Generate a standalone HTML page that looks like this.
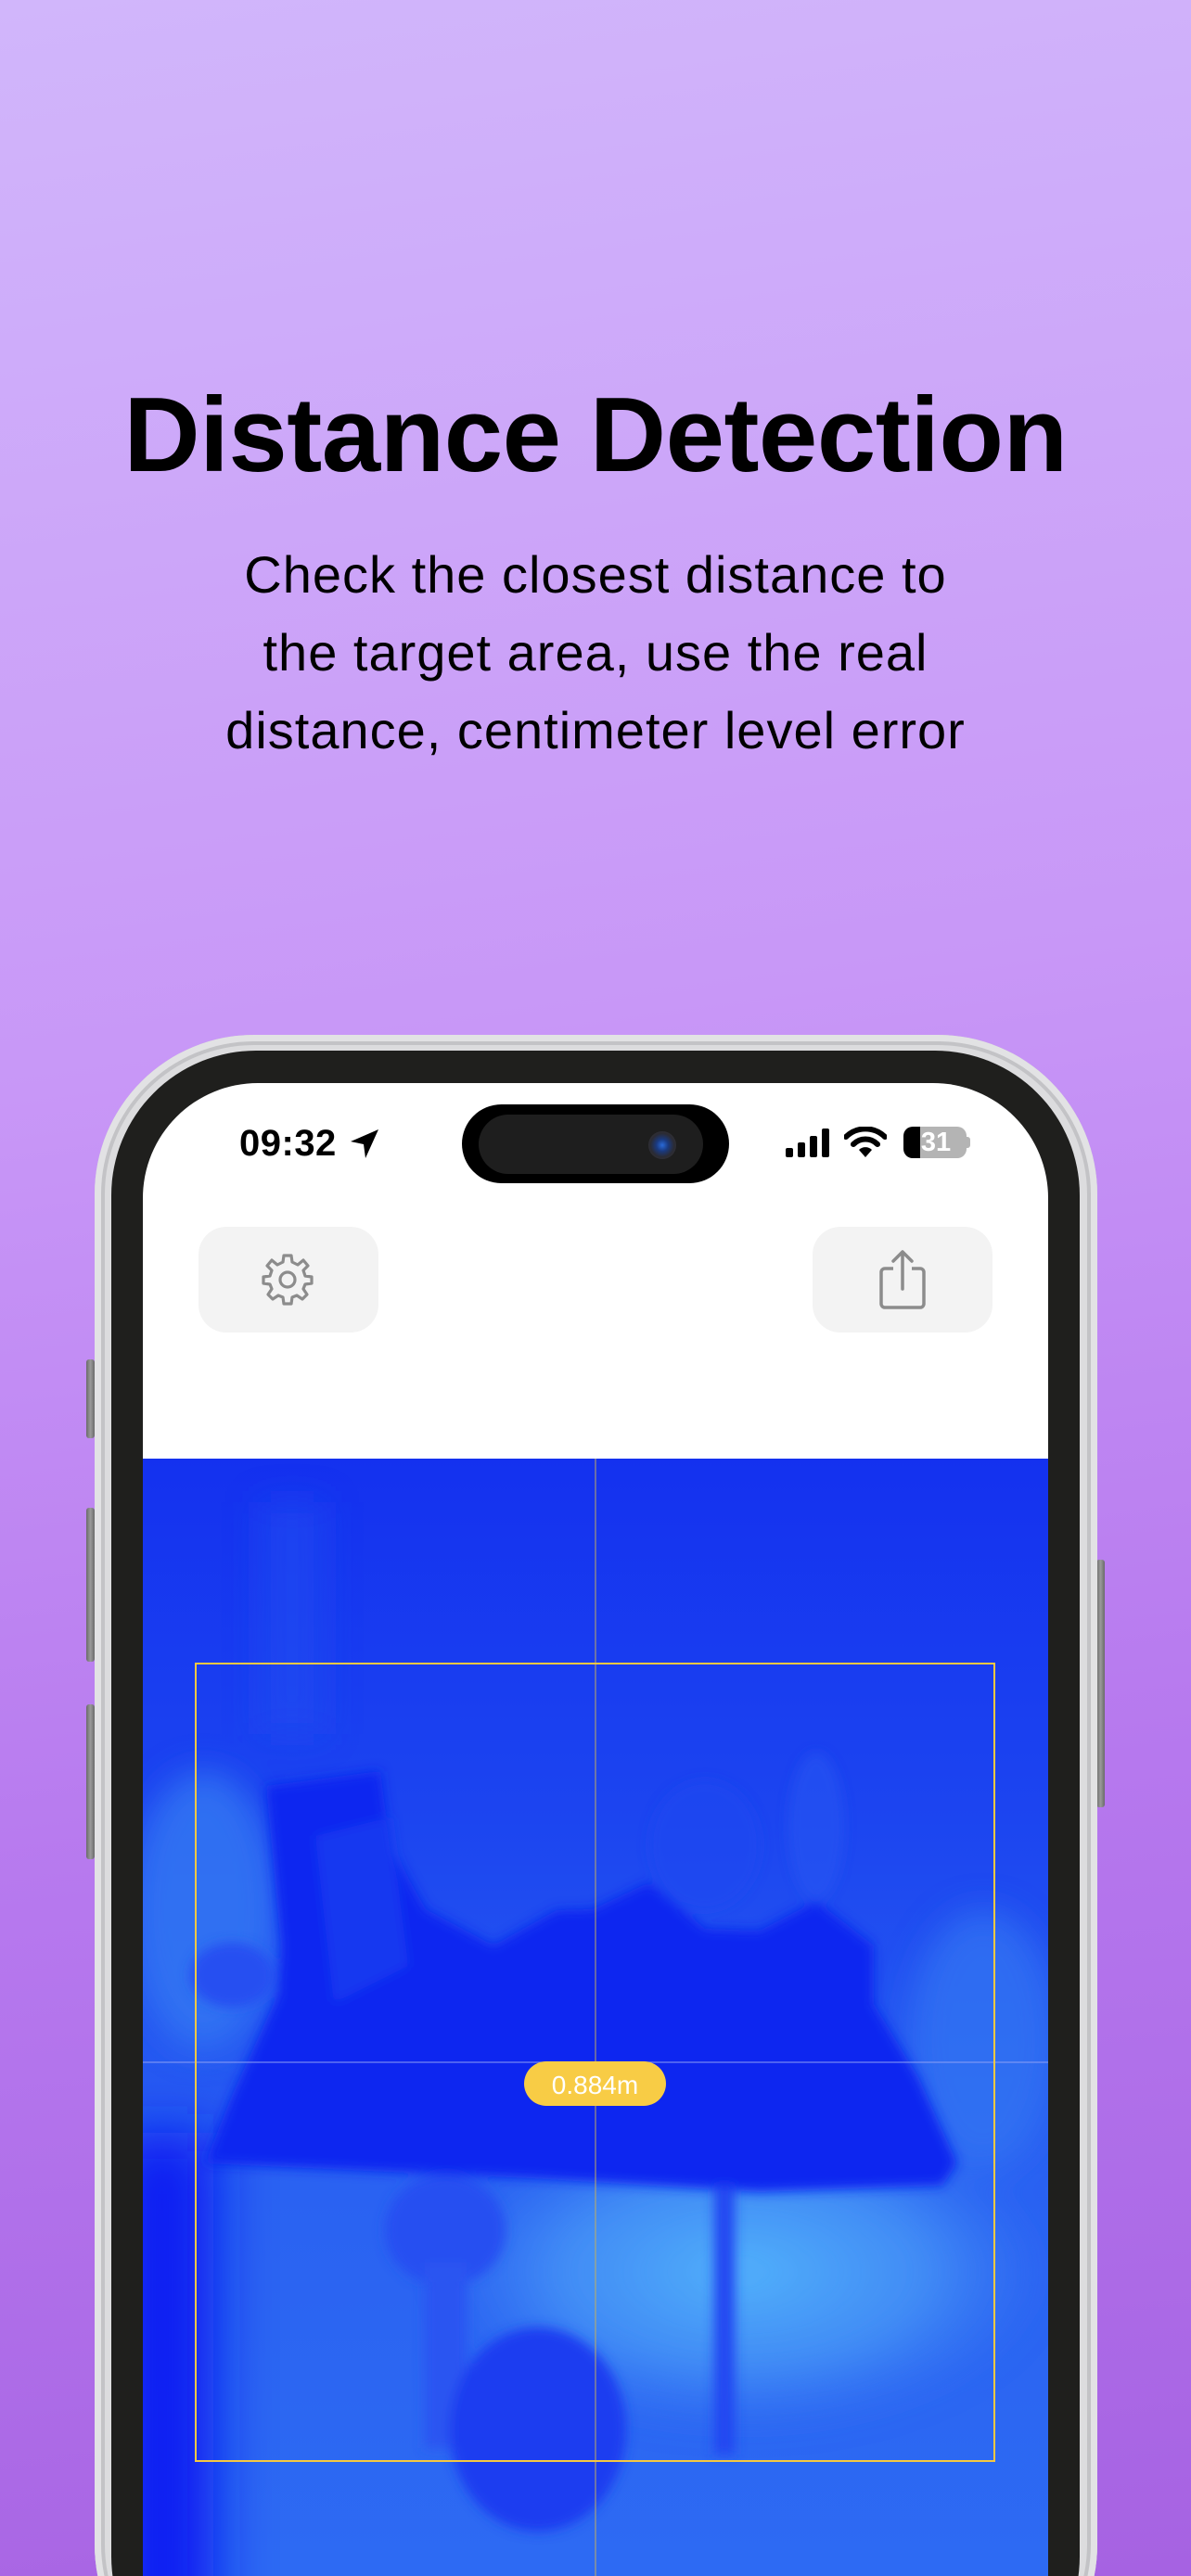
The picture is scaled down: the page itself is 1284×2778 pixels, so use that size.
<!DOCTYPE html>
<html><head><meta charset="utf-8"><style>
*{margin:0;padding:0;box-sizing:border-box}
html,body{width:1284px;height:2778px;overflow:hidden}
body{position:relative;font-family:"Liberation Sans",sans-serif;background:linear-gradient(172deg,#d1b6fb 0%,#c897f7 40%,#b678ee 70%,#a662e2 100%)}
.abs{position:absolute}
#wrap{position:absolute;left:0;top:0;width:1284px;height:2778px;overflow:hidden}
h1{position:absolute;left:0;width:1284px;top:405px;text-align:center;font-size:114px;font-weight:bold;color:#000;line-height:130px;letter-spacing:-0.5px}
.sub{position:absolute;left:0;width:1284px;top:578px;text-align:center;font-size:56px;line-height:84px;color:#000;letter-spacing:1px}
.frame{left:102px;top:1116px;width:1081px;height:1800px;border-radius:172px;background:#dcdcde;box-shadow:inset 0 0 0 7px #e2e2e4,inset 0 0 0 11px #c3c3c6}
.bezel{left:120px;top:1133px;width:1044px;height:1780px;border-radius:156px;background:#1f1f1d}
.screen{left:154px;top:1168px;width:976px;height:1740px;border-radius:124px;background:#fff;overflow:hidden}
.btn{background:#f3f3f3;border-radius:30px;width:194px;height:114px;top:1323px}
.sidebtn{background:linear-gradient(90deg,#6a6a6a,#9a9a9a,#6a6a6a);border-radius:3px;width:9px}
</style></head><body><div id="wrap">
<h1>Distance Detection</h1>
<div class="sub">Check the closest distance to<br>the target area, use the real<br>distance, centimeter level error</div>

<div class="abs sidebtn" style="left:93px;top:1466px;height:85px"></div>
<div class="abs sidebtn" style="left:93px;top:1626px;height:166px"></div>
<div class="abs sidebtn" style="left:93px;top:1838px;height:167px"></div>
<div class="abs sidebtn" style="left:1182px;top:1682px;height:267px"></div>

<div class="abs frame"></div>
<div class="abs bezel"></div>
<div class="abs screen">
  <svg class="abs" style="left:0;top:405px" width="976" height="1300" viewBox="154 1573 976 1300">
    <defs>
      <filter id="b1" x="-50%" y="-50%" width="200%" height="200%"><feGaussianBlur stdDeviation="18"/></filter>
      <filter id="b3" x="-100%" y="-50%" width="300%" height="200%"><feGaussianBlur stdDeviation="30"/></filter>
      <filter id="b2" x="-20%" y="-20%" width="140%" height="140%"><feGaussianBlur stdDeviation="6"/></filter>
      <linearGradient id="bg" x1="0" y1="0" x2="0" y2="1">
        <stop offset="0" stop-color="#1431ef"/>
        <stop offset="0.3" stop-color="#1c45f0"/>
        <stop offset="0.6" stop-color="#2a62f2"/>
        <stop offset="1" stop-color="#2e6cf3"/>
      </linearGradient>
      <radialGradient id="lt" cx="0.5" cy="0.5" r="0.5">
        <stop offset="0" stop-color="#52b2fa"/>
        <stop offset="0.6" stop-color="#4796f6" stop-opacity="0.8"/>
        <stop offset="1" stop-color="#3b80f4" stop-opacity="0"/>
      </radialGradient>
    </defs>
    <rect x="154" y="1573" width="976" height="1300" fill="url(#bg)"/>
    <g filter="url(#b1)">
      <ellipse cx="800" cy="2450" rx="330" ry="170" fill="url(#lt)"/>
      <ellipse cx="220" cy="2060" rx="80" ry="150" fill="#3679f2" opacity="0.8"/>
      <ellipse cx="1060" cy="2200" rx="80" ry="140" fill="#3477f2" opacity="0.7"/>
      <rect x="280" y="1620" width="70" height="250" fill="#2550f1" opacity="0.5"/>
    </g>
    <g filter="url(#b3)">
      <rect x="120" y="2300" width="110" height="600" fill="#0a1cf2"/>
    </g>
    <g filter="url(#b2)" fill="#0e26f0">
      <polygon points="287,1926 410,1910 420,1990 459,2059 532,2098 600,2060 639,2059 700,2030 760,2080 819,2082 880,2050 942,2098 942,2161 990,2240 1032,2333 1016,2357 819,2364 573,2349 221,2333 250,2260 270,2216 300,2150 303,2098"/>
      <polygon points="340,1980 420,1960 440,2120 360,2160" fill="#1637f0"/>
      <ellipse cx="480" cy="2405" rx="65" ry="60" fill="#2550f1"/>
      <rect x="770" y="2357" width="22" height="290" fill="#2246f1"/>
      <rect x="458" y="2440" width="45" height="200" fill="#2a55f1"/>
      <ellipse cx="580" cy="2620" rx="95" ry="110" fill="#1c3ef0"/>
      <ellipse cx="250" cy="2130" rx="45" ry="35" fill="#2550f1"/>
      <ellipse cx="760" cy="1990" rx="60" ry="70" fill="#2249f0" opacity="0.6"/>
      <ellipse cx="880" cy="1970" rx="30" ry="80" fill="#2a55f1" opacity="0.6"/>
    </g>
    <line x1="642" y1="1573" x2="642" y2="2873" stroke="#c8b05a" stroke-width="1.2" opacity="0.8"/>
    <line x1="154" y1="2224" x2="1130" y2="2224" stroke="#8fa0f5" stroke-width="1.2" opacity="0.8"/>
    <rect x="211" y="1794" width="861" height="860" fill="none" stroke="#f5c842" stroke-width="2"/>
    <rect x="565" y="2223" width="153" height="48" rx="24" fill="#f8cc45"/>
    <text x="641.5" y="2258" text-anchor="middle" font-family="Liberation Sans, sans-serif" font-size="28" fill="#fff">0.884m</text>
  </svg>
</div>

<div class="abs" style="left:498px;top:1191px;width:288px;height:85px;border-radius:43px;background:#000"></div>
<div class="abs" style="left:516px;top:1202px;width:242px;height:64px;border-radius:32px;background:#1e1e1e"></div>
<div class="abs" style="left:699px;top:1220px;width:30px;height:30px;border-radius:50%;background:radial-gradient(circle at 50% 50%,#2a6ad8 0,#1a3a80 30%,#2b2b33 60%,#3a3a40 100%)"></div>

<div class="abs" style="left:258px;top:1210px;font-size:40px;font-weight:bold;color:#000;line-height:46px;letter-spacing:0.5px">09:32</div>
<svg class="abs" style="left:376px;top:1217px" width="34" height="34" viewBox="0 0 34 34"><path d="M32 1 L2 14 L16 17 L18 32 Z" fill="#000"/></svg>
<svg class="abs" style="left:846px;top:1216px" width="52" height="32" viewBox="0 0 52 32">
  <rect x="1" y="22" width="8" height="10" rx="2"/><rect x="14" y="16" width="8" height="16" rx="2"/><rect x="27" y="9" width="8" height="23" rx="2"/><rect x="40" y="1" width="8" height="31" rx="2"/>
</svg>
<svg class="abs" style="left:910px;top:1215px" width="46" height="34" viewBox="0 0 46 34">
  <path d="M2 11 A30 30 0 0 1 44 11" stroke="#000" stroke-width="6" fill="none" stroke-linecap="round"/>
  <path d="M10 19 A18 18 0 0 1 36 19" stroke="#000" stroke-width="6" fill="none" stroke-linecap="round"/>
  <path d="M16 25 L23 33 L30 25 A10 10 0 0 0 16 25Z" fill="#000"/>
</svg>
<div class="abs" style="left:974px;top:1215px;width:68px;height:34px;border-radius:10px;background:linear-gradient(90deg,#000 0 18px,#b4b4b4 18px)"></div>
<div class="abs" style="left:1042px;top:1226px;width:4px;height:12px;border-radius:0 3px 3px 0;background:#b4b4b4"></div>
<div class="abs" style="left:984px;top:1214px;width:50px;font-size:29px;font-weight:bold;color:#fff;line-height:36px;text-align:center">31</div>

<div class="abs btn" style="left:214px"></div>
<div class="abs btn" style="left:876px"></div>
<svg class="abs" style="left:281px;top:1351px" width="58" height="58" viewBox="-29 -29 58 58">
  <path d="M-4,-26 L4,-26 L5,-19 L11,-16 L17,-21 L22,-15 L17,-10 L19,-4 L26,-3 L26,4 L19,5 L17,10 L21,16 L16,21 L10,17 L5,19 L4,26 L-4,26 L-5,19 L-10,17 L-16,21 L-21,16 L-17,10 L-19,5 L-26,4 L-26,-3 L-19,-4 L-17,-10 L-22,-15 L-17,-21 L-11,-16 L-5,-19 Z" fill="none" stroke="#8c8c8c" stroke-width="3.2" stroke-linejoin="round"/>
  <circle r="8" fill="none" stroke="#8c8c8c" stroke-width="3.2"/>
</svg>
<svg class="abs" style="left:946px;top:1346px" width="54" height="68" viewBox="0 0 54 68">
  <path d="M17 22 H8 a4 4 0 0 0 -4 4 V60 a4 4 0 0 0 4 4 H46 a4 4 0 0 0 4 -4 V26 a4 4 0 0 0 -4 -4 H37" fill="none" stroke="#8c8c8c" stroke-width="3.5"/>
  <path d="M27 44 V4 M17 14 L27 4 L37 14" fill="none" stroke="#8c8c8c" stroke-width="3.5" stroke-linecap="round" stroke-linejoin="round"/>
</svg>
</div></body></html>
